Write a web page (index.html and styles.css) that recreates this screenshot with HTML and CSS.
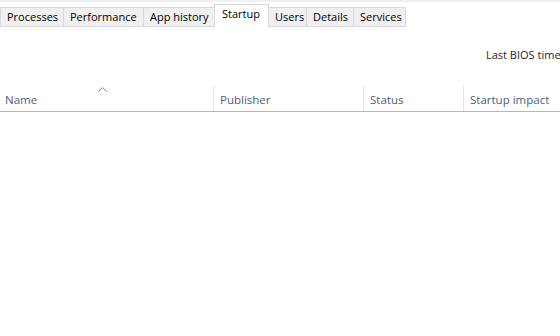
FILE: index.html
```html
<!DOCTYPE html>
<html lang="en">
<head>
    <meta charset="UTF-8">
    <title>Task Manager - Startup</title>
    <link rel="stylesheet" href="styles.css">
</head>
<body>
    <div class="top-band"></div>

    <!-- Tabs -->
    <div class="tabs">
        <div class="tab" style="width: 64px">Processes</div>
        <div class="tab" style="width: 81px">Performance</div>
        <div class="tab" style="width: 72px">App history</div>
        <div class="tab active" style="width: 55px">Startup</div>
        <div class="tab" style="width: 39px">Users</div>
        <div class="tab" style="width: 48px">Details</div>
        <div class="tab" style="width: 53px">Services</div>
    </div>

    <div class="bios-row">
        <span class="bios">Last BIOS time:&nbsp;&nbsp;3.2 seconds</span>
    </div>

    <!-- Column headers -->
    <div class="list-header">
        <div class="col">
            Name
            <svg class="sort" width="9" height="5" viewBox="0 0 9 5">
                <polyline points="0.5,4.5 4.5,0.5 8.5,4.5" fill="none" stroke="#8c8c8c" stroke-width="1"/>
            </svg>
        </div>
        <div class="col">Publisher</div>
        <div class="col">Status</div>
        <div class="col">Startup impact</div>
    </div>
</body>
</html>
```

FILE: styles.css
```css
body {
    font-family: 'Open Sans', 'Noto Sans', sans-serif;
    font-size: 11px;
    background-color: #fff;
    color: #000;
    margin: 0;
    padding: 0;
    width: 560px;
    height: 336px;
    overflow: hidden;
}

.top-band {
    height: 2px;
    background-color: #f0f0f0;
}

/* Tabs */
.tabs {
    display: flex;
    align-items: flex-end;
    margin-top: 2px;
    height: 23px;
}

.tab {
    box-sizing: border-box;
    height: 20px;
    margin-right: -1px;
    padding-left: 6px;
    line-height: 18px;
    white-space: nowrap;
    background-color: #f0f0f0;
    border: 1px solid #d9d9d9;
}

.tab.active {
    position: relative;
    z-index: 1;
    height: 23px;
    line-height: 18px;
    padding-left: 7px;
    background-color: #fff;
    border-bottom: none;
}

.bios-row {
    height: 59px;
    box-sizing: border-box;
    padding: 20px 0 0 486px;
    white-space: nowrap;
    color: #1e1e1e;
}

/* Column headers */
.list-header {
    display: grid;
    grid-template-columns: 213px 150px 100px 1fr;
    height: 25px;
    border-bottom: 1px solid #b5b5b5;
    color: #4c607a;
    font-size: 11.5px;
}

.col {
    position: relative;
    padding: 6px 0 0 6px;
    white-space: nowrap;
    border-left: 1px solid #e5e5e5;
}

.col:first-child {
    padding-left: 5px;
    border-left: none;
}

.sort {
    position: absolute;
    left: 98px;
    top: 1px;
}
```
